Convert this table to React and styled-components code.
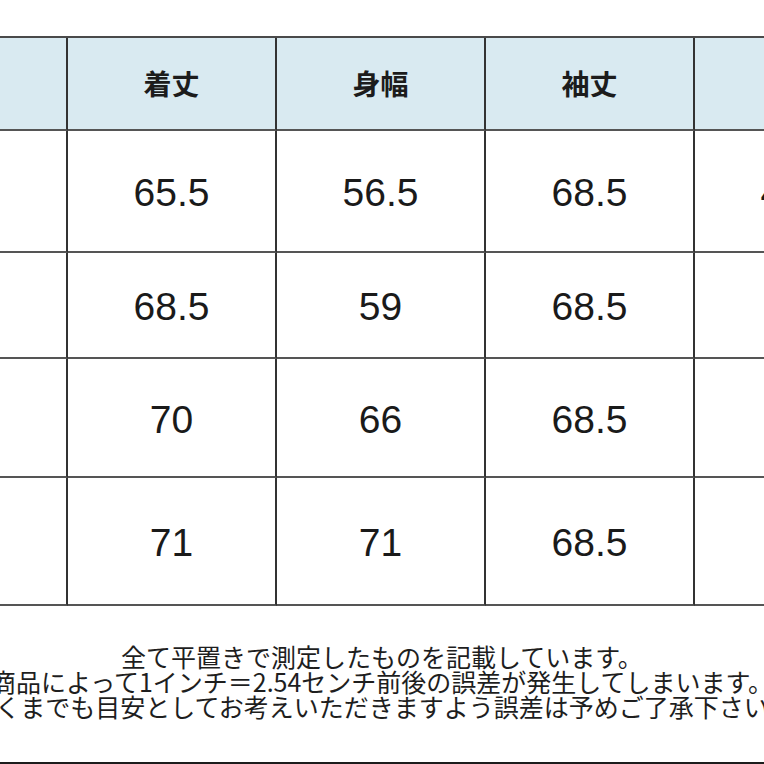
import React from 'react'
import styled, { createGlobalStyle } from 'styled-components'

const GlobalStyle = createGlobalStyle`
  html, body {
    margin: 0;
    padding: 0;
    background: #fff;
  }
  * {
    box-sizing: border-box;
  }
`

const headers = ['', '着丈', '身幅', '袖丈', '肩幅']
const rows = [
  { size: 'S', values: ['65.5', '56.5', '68.5', '48.5'], height: 122 },
  { size: 'M', values: ['68.5', '59', '68.5', '50'], height: 106 },
  { size: 'L', values: ['70', '66', '68.5', '52'], height: 119 },
  { size: 'XL', values: ['71', '71', '68.5', '54'], height: 128 },
]

const notes = [
  '全て平置きで測定したものを記載しています。',
  '商品によって1インチ＝2.54センチ前後の誤差が発生してしまいます。',
  'あくまでも目安としてお考えいただきますよう誤差は予めご了承下さい。',
]

const App = () => {
  return (
    <Page>
      <GlobalStyle />
      <TableClip>
        <Table>
          <Row height={93}>
            {headers.map((h, i) => (
              <HeadCell key={i}>{h}</HeadCell>
            ))}
          </Row>
          {rows.map((r) => (
            <Row key={r.size} height={r.height}>
              <Cell>{r.size}</Cell>
              {r.values.map((v, i) => (
                <Cell key={i}>{v}</Cell>
              ))}
            </Row>
          ))}
        </Table>
      </TableClip>
      <Notes>
        {notes.map((n) => (
          <NoteLine key={n}>{n}</NoteLine>
        ))}
      </Notes>
    </Page>
  )
}

export default App

const Page = styled.div`
  width: 764px;
  height: 764px;
  overflow: hidden;
  display: flex;
  flex-direction: column;
  padding-top: 36px;
  border-bottom: 2px solid #1c1c1c;
  background: #fff;
`

const TableClip = styled.div`
  width: 764px;
  overflow: hidden;
`

const Table = styled.div`
  width: 1045px;
  margin-left: -141px;
  border-top: 2px solid #4a4a4a;
  display: flex;
  flex-direction: column;
`

const Row = styled.div`
  display: grid;
  grid-template-columns: repeat(5, 209px);
  height: ${(p) => p.height}px;
`

const Cell = styled.div`
  display: flex;
  align-items: center;
  justify-content: center;
  border-right: 2px solid #333;
  border-bottom: 2px solid #555;
  font-family: "Liberation Sans", Arial, sans-serif;
  font-size: 39px;
  color: #1a1a1a;
  padding-top: 4px;
`

const HeadCell = styled(Cell)`
  background: #d9eaf1;
  font-family: "Noto Sans CJK JP", sans-serif;
  font-weight: 700;
  font-size: 28px;
  color: #1c1c1c;
  padding-top: 0;
  padding-bottom: 2px;
`

const Notes = styled.div`
  flex: 1;
  display: flex;
  flex-direction: column;
  align-items: center;
  padding-top: 38px;
`

const NoteLine = styled.div`
  font-family: "Noto Sans CJK JP", sans-serif;
  font-size: 25px;
  line-height: 25px;
  color: #1e1e1e;
  white-space: nowrap;
  text-align: center;
`
